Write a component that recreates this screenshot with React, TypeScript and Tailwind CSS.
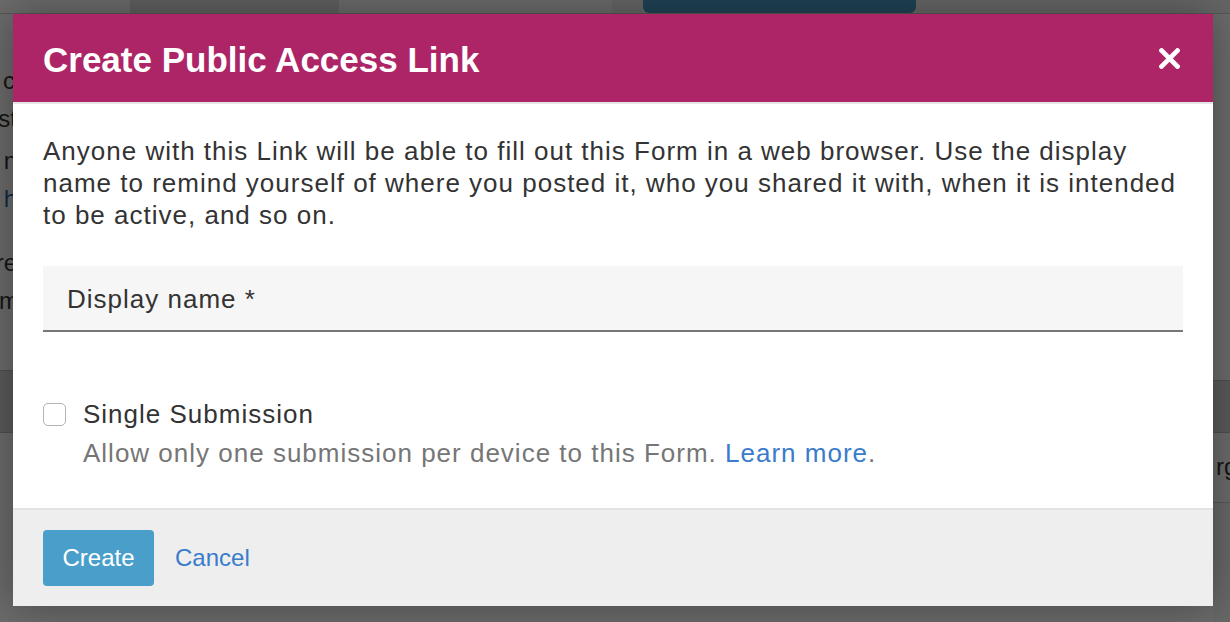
import React from "react";

export default function App() {
  const font = { fontFamily: '"Liberation Sans", Arial, Helvetica, sans-serif' };
  return (
    <div className="relative w-[1230px] h-[622px] overflow-hidden bg-white" style={font}>
      {/* Underlying page */}
      <div className="flex flex-col h-full text-[24px] text-[#333]">
        <div className="flex h-[14px] border-b border-[#cfcfcf]">
          <div className="w-[130px] bg-white" />
          <div className="w-[209px] bg-[#e4e4e4]" />
          <div className="w-[273px] bg-white" />
          <div className="w-[31px] bg-[#f4f4f4]" />
          <div className="w-[273px] bg-[#4a9fca] rounded-b-[6px] -mt-[2px]" />
          <div className="flex-1 bg-[#f4f4f4]" />
        </div>
        <div className="flex flex-1">
          <div className="w-[13px] flex flex-col overflow-hidden">
            <div className="h-[356px] flex flex-col items-end pt-[48px] leading-[38px] whitespace-nowrap">
              <div className="-mr-[2px]">k c</div>
              <div className="-mr-[4px]">st</div>
              <div className="-mr-[4px] mt-[4px]">n</div>
              <div className="-mr-[4px] text-[#2a6aa8]">h</div>
              <div className="-mr-[4px] mt-[26px]">re</div>
              <div className="-mr-[6px]">m</div>
            </div>
            <div className="h-[63px] bg-[#d6d6d6] border-y border-[#bdbdbd]" />
            <div className="flex-1 bg-white" />
          </div>
          <div className="flex-1" />
          <div className="w-[17px] flex flex-col overflow-hidden">
            <div className="h-[366px] bg-white" />
            <div className="h-[53px] bg-[#d6d6d6] border-y border-[#bdbdbd]" />
            <div className="h-[70px] bg-white border-b border-[#cfcfcf] pl-[3px] pt-[18px] leading-[32px] whitespace-nowrap">rg</div>
            <div className="flex-1 bg-[#f7f7f7]" />
          </div>
        </div>
      </div>

      {/* Overlay + modal */}
      <div className="absolute inset-0 bg-black/[0.58] pl-[13px] pt-[14px]">
        <div className="w-[1200px] h-[592px] flex flex-col bg-white shadow-[0_0_40px_rgba(0,0,0,0.35)]">
          <div className="h-[90px] flex items-center justify-between bg-[#ad2567] border-b-2 border-[#e5e5e5] pl-[30px] pr-[33px]">
            <h1 className="text-[35px] font-bold text-white leading-none pt-[2px]">Create Public Access Link</h1>
            <button className="w-[21px] h-[21px] flex items-center justify-center" aria-label="Close">
              <svg width="21" height="21" viewBox="0 0 21 21">
                <path d="M2.5 2.5 L18.5 18.5 M18.5 2.5 L2.5 18.5" stroke="#fff" strokeWidth="4.6" strokeLinecap="square" />
              </svg>
            </button>
          </div>

          <div className="flex-1 px-[30px] pt-[31px] pb-[39px] text-[26px] tracking-[1px] text-[#333]">
            <p className="leading-[32px] whitespace-nowrap">
              Anyone with this Link will be able to fill out this Form in a web browser. Use the display
              <br />
              name to remind yourself of where you posted it, who you shared it with, when it is intended
              <br />
              to be active, and so on.
            </p>
            <div className="mt-[35px] h-[66px] bg-[#f6f6f6] border-b-2 border-[#777] flex items-center px-[24px]">
              <span className="text-[#333] leading-none pt-[1px]">Display name *</span>
            </div>
            <div className="mt-[66px] flex gap-[17px]">
              <div className="w-[23px] h-[23px] mt-[5px] rounded-[5px] border border-[#b3b3b3] bg-white shrink-0" />
              <div className="flex flex-col">
                <span className="leading-[32px]">Single Submission</span>
                <span className="leading-[32px] mt-[7px] text-[#767676]">
                  Allow only one submission per device to this Form.{" "}
                  <a className="text-[#3a7ccc]">Learn more</a>.
                </span>
              </div>
            </div>
          </div>

          <div className="h-[98px] bg-[#eeeeee] border-t-2 border-[#e3e3e3] flex items-center px-[30px] gap-[21px]">
            <button className="h-[56px] w-[111px] rounded-[4px] bg-[#4a9fca] text-white text-[24px]">Create</button>
            <a className="text-[24px] text-[#3a7ccc]">Cancel</a>
          </div>
        </div>
      </div>
    </div>
  );
}
